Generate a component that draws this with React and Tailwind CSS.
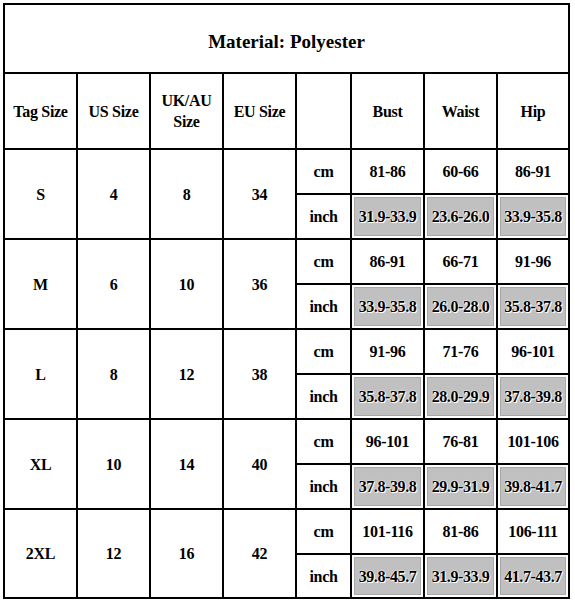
import React from "react";

const rows = [
  { tag: "S", us: "4", uk: "8", eu: "34", cm: ["81-86", "60-66", "86-91"], inch: ["31.9-33.9", "23.6-26.0", "33.9-35.8"] },
  { tag: "M", us: "6", uk: "10", eu: "36", cm: ["86-91", "66-71", "91-96"], inch: ["33.9-35.8", "26.0-28.0", "35.8-37.8"] },
  { tag: "L", us: "8", uk: "12", eu: "38", cm: ["91-96", "71-76", "96-101"], inch: ["35.8-37.8", "28.0-29.9", "37.8-39.8"] },
  { tag: "XL", us: "10", uk: "14", eu: "40", cm: ["96-101", "76-81", "101-106"], inch: ["37.8-39.8", "29.9-31.9", "39.8-41.7"] },
  { tag: "2XL", us: "12", uk: "16", eu: "42", cm: ["101-116", "81-86", "106-111"], inch: ["39.8-45.7", "31.9-33.9", "41.7-43.7"] },
];

const cell = "bg-white flex items-center justify-center text-center text-black";

export default function App() {
  return (
    <div
      className="w-[575px] h-[604px] bg-white pt-[3px] pl-[3px]"
      style={{ fontFamily: '"Liberation Serif", "Times New Roman", serif' }}
    >
      <div
        className="grid w-[567px] bg-black p-[2px] gap-[2px] font-bold text-[16px] leading-[21px] tracking-[-0.3px]"
        style={{
          gridTemplateColumns: "71px 71px 71px 71px 53px 71px 71px 70px",
          gridTemplateRows: "67px 74px 43px 43px 43px 43px 43px 43px 43px 43px 43px 42px",
        }}
      >
        <div className={`${cell} col-span-8 text-[19px] pt-[5px] tracking-normal`}>Material: Polyester</div>
        <div className={cell}>Tag Size</div>
        <div className={cell}>US Size</div>
        <div className={cell}>
          UK/AU
          <br />
          Size
        </div>
        <div className={cell}>EU Size</div>
        <div className={cell}></div>
        <div className={cell}>Bust</div>
        <div className={cell}>Waist</div>
        <div className={cell}>Hip</div>
        {rows.map((r) => (
          <React.Fragment key={r.tag}>
            <div className={`${cell} row-span-2`}>{r.tag}</div>
            <div className={`${cell} row-span-2`}>{r.us}</div>
            <div className={`${cell} row-span-2`}>{r.uk}</div>
            <div className={`${cell} row-span-2`}>{r.eu}</div>
            <div className={cell}>cm</div>
            {r.cm.map((v, i) => (
              <div key={i} className={cell}>
                {v}
              </div>
            ))}
            <div className={cell}>inch</div>
            {r.inch.map((v, i) => (
              <div key={i} className="bg-white p-[2px] flex">
                <div
                  className="flex-1 bg-[#c0c0c0] border border-[#a8a8a8] flex items-center justify-center text-black text-[16px] tracking-[-0.4px]"
                  style={{ textShadow: "0 0 2px #fff, 0 0 1px #fff, 1px 1px 0 #fff" }}
                >
                  {v}
                </div>
              </div>
            ))}
          </React.Fragment>
        ))}
      </div>
    </div>
  );
}
